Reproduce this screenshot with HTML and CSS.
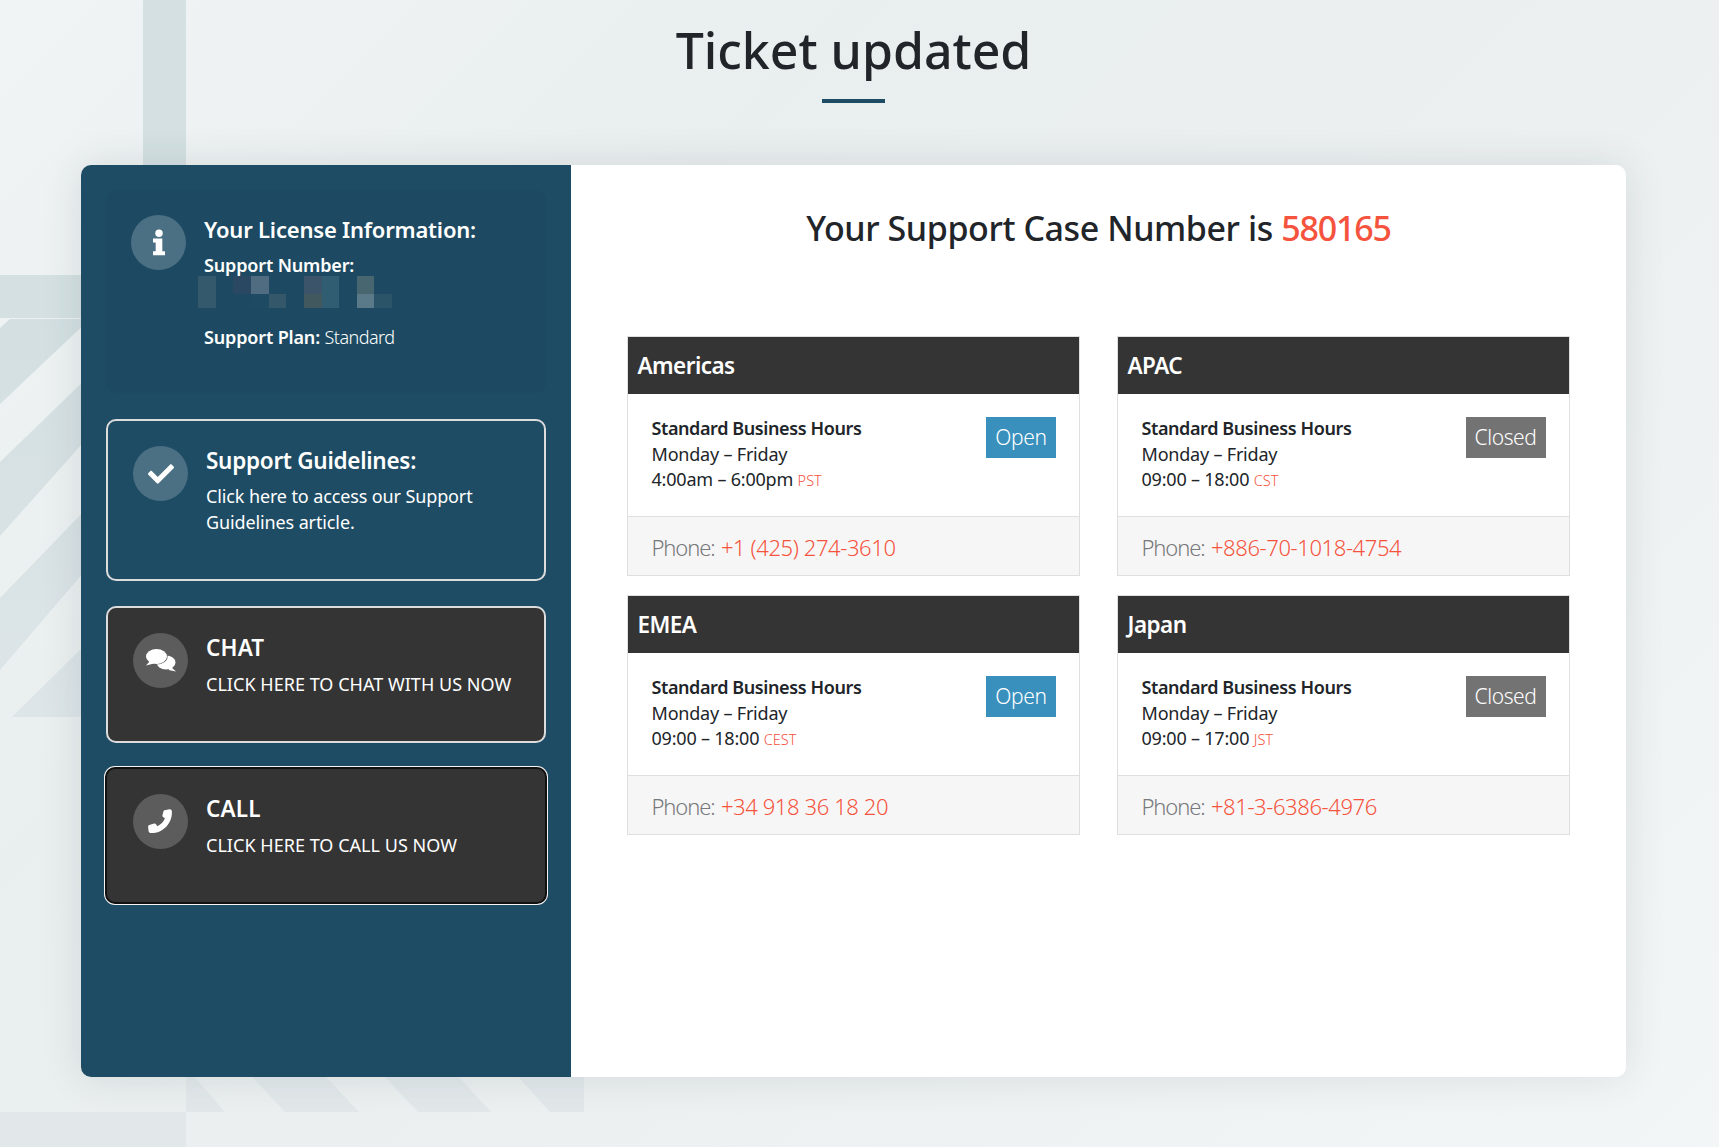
FILE: index.html
```html
<!DOCTYPE html>
<html lang="en">
<head>
<meta charset="utf-8">
<title>Ticket updated</title>
<link rel="stylesheet" href="styles.css">
</head>
<body>
<svg class="bg-art" width="1719" height="1147" viewBox="0 0 1719 1147" aria-hidden="true">
  <defs>
    <linearGradient id="fade" x1="0" y1="318" x2="0" y2="717" gradientUnits="userSpaceOnUse">
      <stop offset="0" stop-color="#d3dfe1"/>
      <stop offset="1" stop-color="#dde5e8"/>
    </linearGradient>
    <clipPath id="stripes2"><rect x="186" y="1060" width="398" height="52"/></clipPath>
  </defs>
  <rect class="art" x="143" y="0" width="43" height="170"/>
  <rect class="art" x="0" y="275" width="90" height="43"/>
  <g fill="url(#fade)">
    <polygon points="10,319 90,319 0,404 0,328"/>
    <polygon points="90,375 90,435 0,536 0,462"/>
    <polygon points="90,505 90,565 0,670 0,598"/>
    <polygon points="90,640 90,717 12,717"/>
  </g>
  <g clip-path="url(#stripes2)" class="art2">
    <polygon points="186,1060 180,1060 225,1112 186,1112"/>
    <polygon points="236,1060 310,1060 359,1112 285,1112"/>
    <polygon points="369,1060 443,1060 491,1112 418,1112"/>
    <polygon points="503,1060 584,1060 584,1112 550,1112"/>
  </g>
  <rect class="art2" x="0" y="1112" width="186" height="35"/>
</svg>

<main class="page">
  <header class="title">
    <h1>Ticket updated</h1>
    <div class="rule"></div>
  </header>

  <section class="card">
    <aside class="side">
      <div class="tile tile-info">
        <span class="disc">
          <svg viewBox="0 0 24 40" width="16" height="27"><circle cx="12" cy="6" r="5.6"/><path d="M3 14h14v19h4v6H3v-6h4V20H3z"/></svg>
        </span>
        <div class="tile-text">
          <h3>Your License Information:</h3>
          <p class="strong">Support Number:</p>
          <svg class="blur" width="194" height="32" viewBox="0 0 194 32" aria-hidden="true">
            <rect x="0" y="0" width="18" height="32" fill="#35596c"/>
            <rect x="35" y="0" width="18" height="18" fill="#2a4861"/>
            <rect x="53" y="0" width="18" height="18" fill="#4f6c80"/>
            <rect x="53" y="18" width="18" height="14" fill="#1e4a63"/>
            <rect x="71" y="18" width="17" height="14" fill="#345869"/>
            <rect x="106" y="0" width="18" height="18" fill="#3b5469"/>
            <rect x="106" y="18" width="18" height="14" fill="#42585f"/>
            <rect x="124" y="0" width="17" height="32" fill="#315d72"/>
            <rect x="159" y="0" width="17" height="18" fill="#47666f"/>
            <rect x="159" y="18" width="17" height="14" fill="#5a7a8a"/>
            <rect x="176" y="18" width="18" height="14" fill="#2c5469"/>
          </svg>
          <p class="plan"><b>Support Plan:</b> <span class="light">Standard</span></p>
        </div>
      </div>

      <a class="tile tile-link tile-guide" href="#">
        <span class="disc">
          <svg viewBox="0 0 512 512" width="26" height="26"><path d="M173.9 439.4L7.5 273c-10-10-10-26.2 0-36.2l36.2-36.2c10-10 26.2-10 36.2 0L192 312.7 432.1 72.6c10-10 26.2-10 36.2 0l36.2 36.2c10 10 10 26.2 0 36.2L210.1 439.4c-10 10-26.2 10-36.2 0z"/></svg>
        </span>
        <div class="tile-text">
          <h3 class="big">Support Guidelines:</h3>
          <p>Click here to access our Support Guidelines article.</p>
        </div>
      </a>

      <a class="tile tile-link tile-dark" href="#">
        <span class="disc disc-dark">
          <svg viewBox="0 0 30 23" width="30" height="23">
            <ellipse cx="20" cy="13.5" rx="9.5" ry="7"/>
            <path d="M25 18l5 4.6-7.5-1.6z"/>
            <ellipse class="bubble-top" cx="10.5" cy="7.5" rx="10.5" ry="7.5"/>
            <path d="M4 12L0 16.6 8 14.5z"/>
          </svg>
        </span>
        <div class="tile-text">
          <h3 class="big caps">CHAT</h3>
          <p>CLICK HERE TO CHAT WITH US NOW</p>
        </div>
      </a>

      <a class="tile tile-link tile-dark tile-focus" href="#">
        <span class="disc disc-dark">
          <svg viewBox="0 0 26 26" width="25" height="25"><path d="M17.2 1.2L22.3.2C23.6 0 24.6.8 24.8 2 25.8 15 15 25.6 2.6 25 1.4 24.9.7 24 .6 23L.1 18.6C0 17.6.5 16.9 1.4 16.6L6.4 15.2C7.2 15 7.8 15.2 8.3 15.9L9.7 18C13.2 16.4 16.3 13.3 17.6 9.7L15.6 8.3C15 7.8 14.8 7.2 15 6.4L16.2 2.2C16.4 1.6 16.7 1.3 17.2 1.2z"/></svg>
        </span>
        <div class="tile-text">
          <h3 class="big caps">CALL</h3>
          <p>CLICK HERE TO CALL US NOW</p>
        </div>
      </a>
    </aside>

    <div class="content">
      <h2>Your Support Case Number is <span class="accent">580165</span></h2>
      <div class="regions">
        <article class="region">
          <h4>Americas</h4>
          <div class="hours">
            <div>
              <b>Standard Business Hours</b>
              <p>Monday – Friday</p>
              <p>4:00am – 6:00pm <small>PST</small></p>
            </div>
            <span class="status open">Open</span>
          </div>
          <div class="phone"><span class="label">Phone:</span> <a href="#">+1 (425) 274-3610</a></div>
        </article>
        <article class="region">
          <h4>APAC</h4>
          <div class="hours">
            <div>
              <b>Standard Business Hours</b>
              <p>Monday – Friday</p>
              <p>09:00 – 18:00 <small>CST</small></p>
            </div>
            <span class="status closed">Closed</span>
          </div>
          <div class="phone"><span class="label">Phone:</span> <a href="#">+886-70-1018-4754</a></div>
        </article>
        <article class="region">
          <h4>EMEA</h4>
          <div class="hours">
            <div>
              <b>Standard Business Hours</b>
              <p>Monday – Friday</p>
              <p>09:00 – 18:00 <small>CEST</small></p>
            </div>
            <span class="status open">Open</span>
          </div>
          <div class="phone"><span class="label">Phone:</span> <a href="#">+34 918 36 18 20</a></div>
        </article>
        <article class="region">
          <h4>Japan</h4>
          <div class="hours">
            <div>
              <b>Standard Business Hours</b>
              <p>Monday – Friday</p>
              <p>09:00 – 17:00 <small>JST</small></p>
            </div>
            <span class="status closed">Closed</span>
          </div>
          <div class="phone"><span class="label">Phone:</span> <a href="#">+81-3-6386-4976</a></div>
        </article>
      </div>
    </div>
  </section>
</main>
</body>
</html>
```
FILE: styles.css
```css
* { box-sizing: border-box; }
html, body { margin: 0; padding: 0; }
body {
  position: relative;
  height: 1147px;
  overflow: hidden;
  font-family: "Noto Sans", "Open Sans", sans-serif;
  color: #212529;
  background: linear-gradient(135deg, #f0f4f4 0%, #e9eeee 30%, #ecf0f0 60%, #f3f6f6 100%);
}
a { color: inherit; text-decoration: none; }
h1, h2, h3, h4, p { margin: 0; font-weight: inherit; }

.bg-art { position: absolute; left: 0; top: 0; }
.art { fill: #d4e0e1; }
.art2 { fill: #e2e8ea; }

.page { position: relative; width: 1707px; }

.title { height: 165px; padding-top: 18px; text-align: center; }
.title h1 { font-size: 50px; line-height: 64px; font-weight: 500; letter-spacing: 0; }
.rule { width: 63px; height: 4px; margin: 17px auto 0; background: #1e4c64; }

.card {
  display: grid;
  grid-template-columns: 490px 1055px;
  width: 1545px;
  height: 912px;
  margin-left: 81px;
  border-radius: 10px;
  overflow: hidden;
  box-shadow: 0 0 40px rgba(40, 60, 70, .12);
}

.side {
  display: flex;
  flex-direction: column;
  align-items: center;
  padding-top: 25px;
  background: #1e4c64;
  color: #fff;
}

.tile {
  display: flex;
  width: 440px;
  border-radius: 10px;
}
.tile-info {
  height: 203px;
  padding: 25px 25px 0;
  margin-bottom: 26px;
  background: #1d4a62;
  gap: 18px;
}
.tile-link {
  padding: 25px 25px 0;
  gap: 18px;
  border: 2px solid #dcdcdc;
  margin-bottom: 25px;
}
.tile-guide { height: 162px; }
.tile-dark { height: 137px; background: #343434; }
.tile-focus {
  width: 442px;
  height: 137px;
  margin-top: -1px;
  padding-left: 26px;
  border: 2px solid #111;
  box-shadow: 0 0 0 1px #f4f4f4;
}

.disc {
  flex: none;
  display: flex;
  align-items: center;
  justify-content: center;
  width: 55px;
  height: 55px;
  border-radius: 50%;
  background: #4b6f83;
  fill: #fff;
}
.disc-dark { background: #5c5c5c; }
.bubble-top { stroke: #5c5c5c; stroke-width: 1.2; paint-order: stroke; }

.tile-text { min-width: 0; font-size: 18px; line-height: 26px; font-weight: 400; letter-spacing: -.12px; }
.tile-text h3 { font-size: 22px; line-height: 28px; font-weight: 600; letter-spacing: -.2px; margin-bottom: 8.5px; }
.tile-text h3.big { font-size: 22.5px; letter-spacing: -.28px; margin-top: 1px; margin-bottom: 7.5px; }
.tile-dark .tile-text { letter-spacing: .03px; }
.tile-text h3.caps { letter-spacing: .15px; margin-bottom: 8.5px; }
.strong, .plan b { font-weight: 600; letter-spacing: -.15px; }
.blur { display: block; margin-left: -6px; margin-top: -2px; }
.plan { margin-top: 16.5px; }
.light { font-weight: 300; letter-spacing: -.55px; }

.content { background: #fff; padding: 0 56px; }
.content h2 {
  height: 171px;
  padding-top: 40px;
  text-align: center;
  font-size: 34px;
  line-height: 46px;
  font-weight: 500;
  letter-spacing: -.42px;
}
.accent { color: #f5533d; letter-spacing: -1.2px; }

.regions {
  display: grid;
  grid-template-columns: 453px 453px;
  column-gap: 37px;
  row-gap: 19px;
}
.region {
  height: 240px;
  border: 1px solid #dfdfdf;
  display: flex;
  flex-direction: column;
}
.region h4 {
  flex: none;
  height: 57px;
  padding: 0 9.5px;
  background: #343434;
  color: #fff;
  font-size: 22.5px;
  line-height: 58px;
  font-weight: 600;
  letter-spacing: -.55px;
}
.hours {
  flex: none;
  display: flex;
  justify-content: space-between;
  align-items: flex-start;
  height: 123px;
  padding: 22px 23.5px 0 23.5px;
  border-bottom: 1px solid #dfdfdf;
  font-size: 18px;
  line-height: 25.5px;
  font-weight: 400;
  letter-spacing: -.2px;
}
.hours b { font-weight: 600; letter-spacing: -.4px; }
.hours small { font-size: 14.5px; color: #f5533d; font-weight: 300; letter-spacing: 0; }
.status {
  margin-top: 1px;
  height: 41px;
  padding: 0 9px;
  color: #fff;
  font-size: 21px;
  line-height: 41px;
  font-weight: 300;
  letter-spacing: -.4px;
}
.status.open { background: #3a90bd; }
.status.closed { background: #737373; }
.phone {
  flex: none;
  height: 58px;
  padding: 0 23.5px;
  background: #f6f6f6;
  color: #77797c;
  font-size: 22px;
  line-height: 60px;
  font-weight: 300;
  letter-spacing: -.4px;
}
.label { letter-spacing: -1.1px; margin-right: 1px; }
.phone a { color: #f5533d; }
```
